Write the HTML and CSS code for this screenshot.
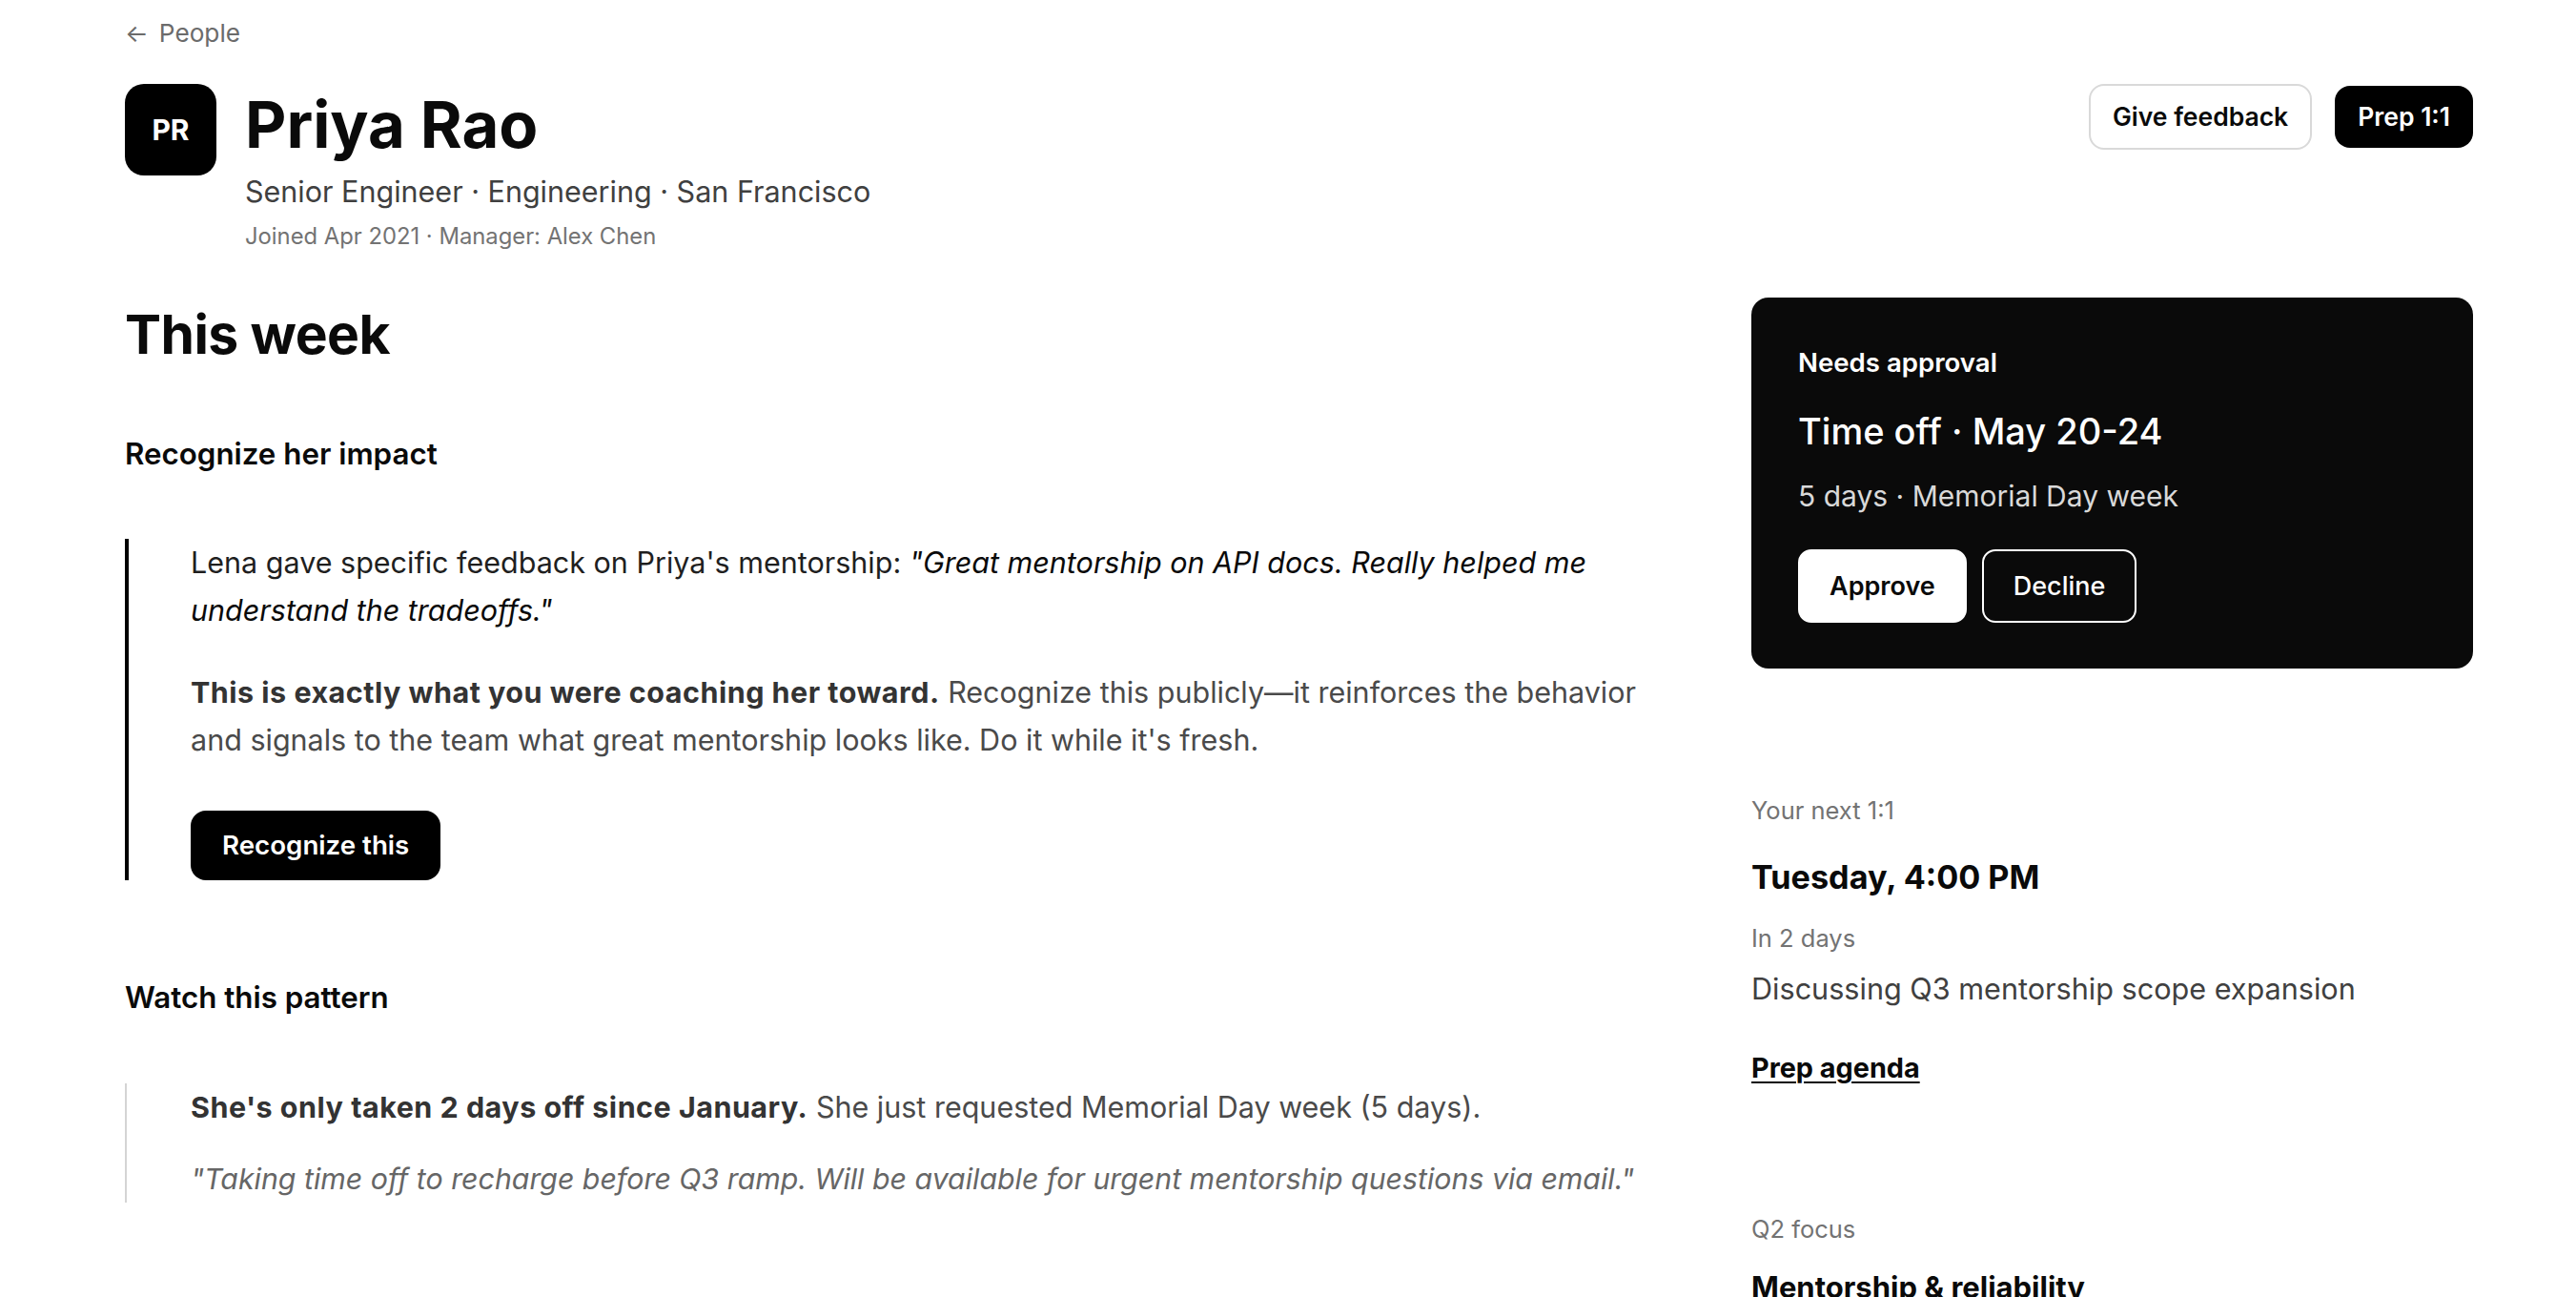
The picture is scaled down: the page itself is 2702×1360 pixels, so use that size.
FILE: index.html
```html
<!DOCTYPE html>
<html lang="en">
<head>
<meta charset="utf-8">
<title>Priya Rao</title>
<link rel="stylesheet" href="styles.css">
</head>
<body>
<div class="page">
  <a class="back" href="#"><span class="back-arrow">←</span>People</a>

  <header class="profile">
    <div class="avatar">PR</div>
    <div class="info">
      <h1 class="name">Priya Rao</h1>
      <p class="role">Senior Engineer · Engineering · San Francisco</p>
      <p class="meta">Joined Apr 2021 · Manager: Alex Chen</p>
    </div>
    <div class="actions">
      <button class="btn btn-outline">Give feedback</button>
      <button class="btn btn-dark">Prep 1:1</button>
    </div>
  </header>

  <div class="layout">
    <main class="main">
      <h2 class="week-title">This week</h2>

      <section class="item">
        <h3 class="item-title">Recognize her impact</h3>
        <div class="callout callout-strong">
          <p class="lead">Lena gave specific feedback on Priya's mentorship: <em>"Great mentorship on API docs. Really helped me understand the tradeoffs."</em></p>
          <p class="body"><strong>This is exactly what you were coaching her toward.</strong> Recognize this publicly—it reinforces the behavior and signals to the team what great mentorship looks like. Do it while it's fresh.</p>
          <button class="btn btn-dark btn-cta">Recognize this</button>
        </div>
      </section>

      <section class="item">
        <h3 class="item-title">Watch this pattern</h3>
        <div class="callout callout-soft">
          <p class="body"><strong>She's only taken 2 days off since January.</strong> She just requested Memorial Day week (5 days).</p>
          <p class="quote">"Taking time off to recharge before Q3 ramp. Will be available for urgent mentorship questions via email."</p>
        </div>
      </section>
    </main>

    <aside class="side">
      <div class="approval">
        <p class="approval-label">Needs approval</p>
        <p class="approval-title">Time off · May 20-24</p>
        <p class="approval-sub">5 days · Memorial Day week</p>
        <div class="approval-actions">
          <button class="btn btn-light">Approve</button>
          <button class="btn btn-ghost">Decline</button>
        </div>
      </div>

      <div class="next">
        <p class="side-label">Your next 1:1</p>
        <p class="next-time">Tuesday, 4:00 PM</p>
        <p class="next-when">In 2 days</p>
        <p class="next-topic">Discussing Q3 mentorship scope expansion</p>
        <a class="next-link" href="#">Prep agenda</a>
      </div>

      <div class="focus">
        <p class="side-label">Q2 focus</p>
        <p class="focus-title">Mentorship &amp; reliability</p>
      </div>
    </aside>
  </div>
</div>
</body>
</html>
```

FILE: styles.css
```css
* {
  box-sizing: border-box;
}

html, body {
  margin: 0;
  padding: 0;
  background: #ffffff;
}

body {
  font-family: Inter, "Noto Sans", "Liberation Sans", sans-serif;
  color: #0a0a0a;
}

p, h1, h2, h3 {
  margin: 0;
}

.page {
  width: 2594px;
  padding: 17px 0 0 131px;
}

/* back link */
.back {
  display: block;
  font-size: 26.2px;
  line-height: 36px;
  color: #6b6b6b;
  text-decoration: none;
}

.back-arrow {
  display: inline-block;
  font-size: 26px;
  margin-right: 11px;
}

/* header */
.profile {
  display: flex;
  align-items: flex-start;
  margin-top: 35px;
}

.avatar {
  width: 96px;
  height: 96px;
  flex: 0 0 96px;
  border-radius: 20px;
  background: #000;
  color: #fff;
  font-size: 30px;
  font-weight: 700;
  display: flex;
  align-items: center;
  justify-content: center;
}

.info {
  margin-left: 30px;
  flex: 1;
}

.name {
  margin-top: 7px;
  font-size: 67px;
  line-height: 72px;
  font-weight: 700;
}

.role {
  margin-top: 12px;
  font-size: 30.5px;
  line-height: 43px;
  color: #404040;
}

.meta {
  margin-top: 10px;
  font-size: 23.8px;
  line-height: 32px;
  color: #737373;
}

.actions {
  display: flex;
  align-items: center;
  gap: 24px;
  height: 69px;
}

.btn {
  font-family: inherit;
  border: 0;
  cursor: pointer;
  font-weight: 600;
}

.actions .btn {
  font-size: 26.5px;
  line-height: 65px;
  padding: 0 24px;
  border-radius: 16px;
}

.actions .btn-outline {
  padding: 0 23px;
}

.btn-outline {
  background: #fff;
  color: #0a0a0a;
  border: 2px solid #d9d9d9 !important;
}

.btn-dark {
  background: #000;
  color: #fff;
}

/* layout */
.layout {
  display: grid;
  grid-template-columns: 1fr 757px;
  column-gap: 110px;
  margin-top: 48px;
}

.week-title {
  margin-top: 5px;
  font-size: 57px;
  line-height: 68px;
  font-weight: 700;
  letter-spacing: -0.01em;
}

.item {
  margin-top: 70px;
}

.item + .item {
  margin-top: 102px;
}

.item-title {
  font-size: 31.3px;
  line-height: 42px;
  font-weight: 600;
  margin-bottom: 68px;
}

.item + .item .item-title {
  margin-bottom: 69px;
}

.callout {
  font-size: 30.5px;
  line-height: 50px;
}

.callout strong {
  letter-spacing: 0.016em;
}

.callout-strong {
  border-left: 4px solid #000;
  padding-left: 65px;
}

.callout-soft {
  border-left: 2px solid #d4d4d4;
  padding-left: 67px;
}

.lead {
  color: #1f1f1f;
}

.lead em {
  color: #0a0a0a;
}

.body {
  color: #4a4a4a;
  margin-top: 36px;
}

.callout-soft .body {
  margin-top: 0;
}

.body strong {
  color: #333;
  font-weight: 700;
}

.quote {
  margin-top: 25px;
  font-size: 30.3px;
  color: #666;
  font-style: italic;
}

.btn-cta {
  display: block;
  margin-top: 49px;
  font-size: 27.7px;
  line-height: 73px;
  padding: 0 33px;
  border-radius: 16px;
}

/* side */
.approval {
  background: #0a0a0a;
  color: #fff;
  border-radius: 18px;
  padding: 51px 48px 48px 49px;
}

.approval-label {
  font-size: 27.6px;
  line-height: 35px;
  font-weight: 600;
}

.approval-title {
  margin-top: 28px;
  font-size: 38px;
  line-height: 52px;
  font-weight: 500;
}

.approval-sub {
  margin-top: 21px;
  font-size: 30px;
  line-height: 42px;
  color: #d9d9d9;
}

.approval-actions {
  display: flex;
  gap: 16px;
  margin-top: 35px;
}

.approval-actions .btn {
  font-size: 27px;
  line-height: 73px;
  padding: 0 31px;
  border-radius: 14px;
  border: 2px solid #fff;
}

.btn-light {
  background: #fff;
  color: #0a0a0a;
}

.btn-ghost {
  background: transparent;
  color: #fff;
  font-weight: 500 !important;
}

.next {
  margin-top: 133px;
}

.side-label {
  font-size: 25.5px;
  line-height: 32px;
  color: #737373;
}

.next-time {
  margin-top: 32px;
  font-size: 34.2px;
  line-height: 44px;
  font-weight: 700;
}

.next-when {
  margin-top: 26px;
  font-size: 25.5px;
  line-height: 32px;
  color: #737373;
}

.next-topic {
  margin-top: 16px;
  font-size: 30.6px;
  line-height: 42px;
  color: #404040;
}

.next-link {
  display: inline-block;
  margin-top: 43px;
  font-size: 28.8px;
  line-height: 38px;
  font-weight: 700;
  color: #0a0a0a;
  text-decoration: underline;
  text-decoration-thickness: 2px;
  text-underline-offset: 4px;
}

.focus {
  margin-top: 134px;
}

.focus-title {
  margin-top: 23px;
  font-size: 31px;
  line-height: 44px;
  font-weight: 700;
}
```
